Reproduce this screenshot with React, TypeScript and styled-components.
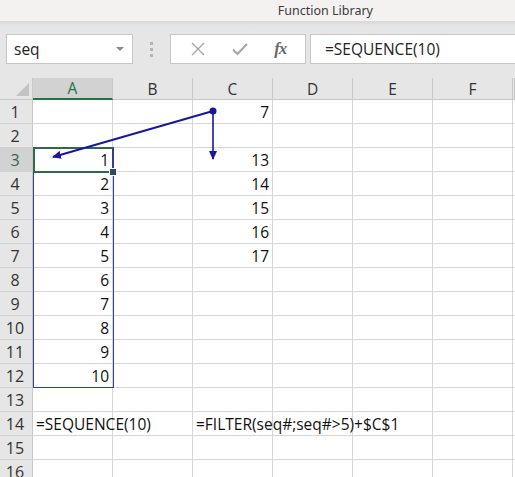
import styled, { createGlobalStyle } from "styled-components";

const GlobalStyle = createGlobalStyle`
  html, body {
    margin: 0;
    padding: 0;
    background: #ffffff;
    overflow: hidden;
  }
  body {
    font-family: "Open Sans", "Noto Sans", sans-serif;
  }
`;

const COLS = ["A", "B", "C", "D", "E", "F"];
const ROW_COUNT = 16;

// values placed in the sheet, keyed by "col:row"
const cells: Record<string, { text: string; align?: "left" | "right" }> = {
  "C:1": { text: "7" },
  "C:3": { text: "13" },
  "C:4": { text: "14" },
  "C:5": { text: "15" },
  "C:6": { text: "16" },
  "C:7": { text: "17" },
  "A:14": { text: "=SEQUENCE(10)", align: "left" },
  "C:14": { text: "=FILTER(seq#;seq#>5)+$C$1", align: "left" },
};
for (let i = 1; i <= 10; i++) cells[`A:${i + 2}`] = { text: String(i) };

const Page = styled.div`
  width: 515px;
  height: 477px;
  overflow: hidden;
  display: flex;
  flex-direction: column;
  background: #fff;
`;

const Ribbon = styled.div`
  flex-shrink: 0;
  height: 21px;
  background: #f3f2f1;
  display: flex;
  justify-content: flex-end;
  align-items: center;
  padding-right: 142px;
  font-family: "Noto Sans", "Open Sans", sans-serif;
  font-size: 12.5px;
  color: #3b3b3b;
`;

const FormulaBand = styled.div`
  flex-shrink: 0;
  height: 57px;
  background: linear-gradient(#d7d7d7 0px, #e4e4e4 4px, #e6e6e6 10px);
  display: flex;
  align-items: flex-start;
  padding-top: 13px;
  box-sizing: border-box;
`;

const NameBox = styled.div`
  margin-left: 6px;
  width: 127px;
  height: 30px;
  box-sizing: border-box;
  background: #fff;
  border: 1px solid #c6c6c6;
  display: flex;
  align-items: center;
  justify-content: space-between;
  padding: 0 8px 0 7px;
  font-size: 15.5px;
  color: #222;
`;

const Caret = styled.span`
  width: 0;
  height: 0;
  border-left: 4px solid transparent;
  border-right: 4px solid transparent;
  border-top: 4px solid #8a8a8a;
`;

const Grip = styled.div`
  width: 37px;
  height: 30px;
  display: flex;
  flex-direction: column;
  align-items: center;
  justify-content: center;
  gap: 3px;
`;

const GripDot = styled.span`
  width: 3px;
  height: 3px;
  background: #b3b3b3;
`;

const ButtonsBox = styled.div`
  width: 136px;
  height: 30px;
  box-sizing: border-box;
  background: #fff;
  border: 1px solid #c6c6c6;
  display: flex;
  align-items: center;
  justify-content: space-around;
  padding: 0 6px;
`;

const Fx = styled.span`
  font-family: "Liberation Serif", "DejaVu Serif", serif;
  font-style: italic;
  font-weight: bold;
  font-size: 17px;
  color: #6a6a6a;
  letter-spacing: -1px;
`;

const FormulaInput = styled.div`
  margin-left: 4px;
  flex: 1;
  height: 30px;
  box-sizing: border-box;
  background: #fff;
  border: 1px solid #c6c6c6;
  border-right: none;
  display: flex;
  align-items: center;
  padding-left: 14px;
  font-size: 15.5px;
  color: #222;
`;

const SheetWrap = styled.div`
  position: relative;
  flex: 1;
`;

const Grid = styled.div`
  display: grid;
  grid-template-columns: 33px repeat(6, 80px) 2px;
  grid-template-rows: 22px repeat(${ROW_COUNT}, 24px);
`;

const Corner = styled.div`
  background: #e6e6e6;
  border-right: 1px solid #c8c8c8;
  border-bottom: 1px solid #c8c8c8;
  box-sizing: border-box;
  position: relative;
  &::after {
    content: "";
    position: absolute;
    right: 3px;
    bottom: 3px;
    width: 0;
    height: 0;
    border-left: 13px solid transparent;
    border-bottom: 13px solid #c3c3c3;
  }
`;

const ColHead = styled.div<{ $active?: boolean }>`
  box-sizing: border-box;
  background: ${(p) => (p.$active ? "#d2d2d2" : "#e6e6e6")};
  border-right: 1px solid #c8c8c8;
  border-bottom: ${(p) => (p.$active ? "2px solid #217346" : "1px solid #c8c8c8")};
  color: ${(p) => (p.$active ? "#217346" : "#333")};
  font-size: 15.5px;
  display: flex;
  align-items: center;
  justify-content: center;
`;

const RowHead = styled.div<{ $active?: boolean }>`
  box-sizing: border-box;
  background: ${(p) => (p.$active ? "#d2d2d2" : "#e6e6e6")};
  border-right: 1px solid #c8c8c8;
  border-bottom: 1px solid #d0d0d0;
  color: ${(p) => (p.$active ? "#2f6b48" : "#333")};
  font-size: 16px;
  display: flex;
  align-items: center;
  justify-content: center;
  padding-right: 2px;
`;

const Cell = styled.div<{ $align?: "left" | "right" }>`
  box-sizing: border-box;
  border-right: 1px solid #d6d6d6;
  border-bottom: 1px solid #d6d6d6;
  font-size: 15.5px;
  color: #111;
  display: flex;
  align-items: center;
  justify-content: ${(p) => (p.$align === "left" ? "flex-start" : "flex-end")};
  padding: 1px 3px 0 3px;
  white-space: nowrap;
  overflow: visible;
  position: relative;
  z-index: ${(p) => (p.$align === "left" ? 1 : 0)};
`;

const Spill = styled.div`
  position: absolute;
  left: 33px;
  top: 69px;
  width: 81px;
  height: 241px;
  border: 1px solid #2e3f9e;
  box-sizing: border-box;
  pointer-events: none;
`;

const Selection = styled.div`
  position: absolute;
  left: 33px;
  top: 69px;
  width: 81px;
  height: 26px;
  border: 2px solid #2f6b48;
  border-right-color: #2e3f9e;
  box-sizing: border-box;
  pointer-events: none;
  &::after {
    content: "";
    position: absolute;
    right: -5px;
    bottom: -5px;
    width: 6px;
    height: 6px;
    background: #2c4a66;
    border: 1px solid #fff;
  }
`;

const Arrows = styled.svg`
  position: absolute;
  left: 0;
  top: 0;
  pointer-events: none;
`;

export default function App() {
  return (
    <>
      <GlobalStyle />
      <Page>
        <Ribbon>Function Library</Ribbon>
        <FormulaBand>
          <NameBox>
            <span>seq</span>
            <Caret />
          </NameBox>
          <Grip>
            <GripDot />
            <GripDot />
            <GripDot />
          </Grip>
          <ButtonsBox>
            <svg width="16" height="16" viewBox="0 0 16 16">
              <path d="M2 2 L14 14 M14 2 L2 14" stroke="#a6a6a6" strokeWidth="1.4" fill="none" />
            </svg>
            <svg width="18" height="16" viewBox="0 0 18 16">
              <path d="M2 8.5 L6.5 13 L16 3" stroke="#a6a6a6" strokeWidth="2" fill="none" />
            </svg>
            <Fx>fx</Fx>
          </ButtonsBox>
          <FormulaInput>=SEQUENCE(10)</FormulaInput>
        </FormulaBand>
        <SheetWrap>
          <Grid>
            <Corner />
            {COLS.map((c) => (
              <ColHead key={c} $active={c === "A"}>
                {c}
              </ColHead>
            ))}
            <ColHead />
            {Array.from({ length: ROW_COUNT }, (_, i) => i + 1).map((r) => [
              <RowHead key={`h${r}`} $active={r === 3}>
                {r}
              </RowHead>,
              ...COLS.map((c) => {
                const v = cells[`${c}:${r}`];
                return (
                  <Cell key={`${c}${r}`} $align={v?.align}>
                    {v?.text}
                  </Cell>
                );
              }),
              <Cell key={`g${r}`} />,
            ])}
          </Grid>
          <Spill />
          <Selection />
          <Arrows width="515" height="400" viewBox="0 78 515 400">
            <defs>
              <marker id="head" markerWidth="9" markerHeight="8" refX="8" refY="4" orient="auto" markerUnits="userSpaceOnUse">
                <path d="M0 0 L9 4 L0 8 Z" fill="#1616a3" />
              </marker>
            </defs>
            <line x1="213" y1="111" x2="53" y2="157" stroke="#1616a3" strokeWidth="2" markerEnd="url(#head)" />
            <line x1="213" y1="111" x2="213" y2="159" stroke="#1616a3" strokeWidth="1.6" markerEnd="url(#head)" />
            <circle cx="213" cy="111" r="3.5" fill="#1616a3" />
          </Arrows>
        </SheetWrap>
      </Page>
    </>
  );
}
